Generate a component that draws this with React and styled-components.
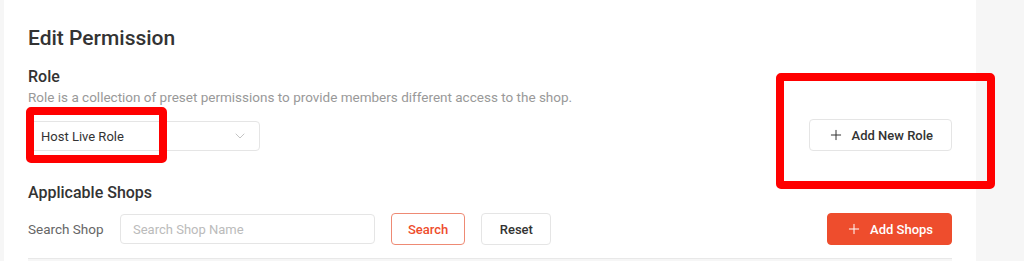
import React from "react";
import styled, { createGlobalStyle } from "styled-components";
import { Plus, ChevronDown } from "lucide-react";

const GlobalStyle = createGlobalStyle`
  body {
    margin: 0;
    background: #f6f6f6;
    font-family: Roboto, "Liberation Sans", Arial, sans-serif;
    color: #333;
  }
`;

export default function App() {
  return (
    <>
      <GlobalStyle />
      <StyledPage>
        <StyledCard>
          <StyledTitle>Edit Permission</StyledTitle>

          <StyledRoleRow>
            <div>
              <StyledSectionTitle>Role</StyledSectionTitle>
              <StyledHint>
                Role is a collection of preset permissions to provide members different access to the shop.
              </StyledHint>
              <StyledSelect>
                <span>Host Live Role</span>
                <ChevronDown size={16} strokeWidth={1.5} color="#c4c4c4" />
              </StyledSelect>
            </div>
            <StyledButton $icon>
              <Plus size={16} strokeWidth={1.5} />
              Add New Role
            </StyledButton>
          </StyledRoleRow>

          <StyledShopsTitle>Applicable Shops</StyledShopsTitle>
          <StyledSearchRow>
            <StyledLabel>Search Shop</StyledLabel>
            <StyledInput placeholder="Search Shop Name" />
            <StyledButton $variant="outline">Search</StyledButton>
            <StyledButton>Reset</StyledButton>
            <StyledSpacer />
            <StyledButton $variant="primary" $icon>
              <Plus size={16} strokeWidth={1.5} />
              Add Shops
            </StyledButton>
          </StyledSearchRow>
          <StyledTableHead />
        </StyledCard>

        <StyledMark $left={26} $top={107} $width={141} $height={56} />
        <StyledMark $left={776} $top={73} $width={219} $height={116} />
      </StyledPage>
    </>
  );
}

const StyledPage = styled.div`
  position: relative;
  height: 261px;
  overflow: hidden;
  padding-left: 4px;
`;

const StyledCard = styled.section`
  width: 924px;
  height: 261px;
  background: #fff;
  padding: 0 24px;
  overflow: hidden;
`;

const StyledTitle = styled.h2`
  margin: 0;
  padding-top: 25px;
  font-size: 21px;
  line-height: 26px;
  font-weight: 500;
  color: #333;
`;

const StyledRoleRow = styled.div`
  display: flex;
  justify-content: space-between;
  align-items: flex-end;
  margin-top: 16px;
`;

const StyledSectionTitle = styled.h3`
  margin: 0;
  font-size: 16px;
  line-height: 20px;
  font-weight: 500;
  color: #333;
`;

const StyledHint = styled.p`
  margin: 2px 0 0;
  font-size: 13.5px;
  line-height: 16px;
  color: #999;
`;

const StyledSelect = styled.div`
  display: flex;
  align-items: center;
  justify-content: space-between;
  box-sizing: border-box;
  width: 232px;
  height: 30px;
  margin-top: 16px;
  padding: 0 11px 0 12px;
  border: 1px solid #e5e5e5;
  border-radius: 4px;
  font-size: 13px;
  color: #333;
`;

const StyledShopsTitle = styled(StyledSectionTitle)`
  margin-top: 32px;
`;

const StyledSearchRow = styled.div`
  display: flex;
  align-items: center;
  gap: 16px;
  margin-top: 10px;
`;

const StyledLabel = styled.span`
  width: 76px;
  font-size: 13.5px;
  color: #666;
`;

const StyledInput = styled.input`
  box-sizing: border-box;
  width: 255px;
  height: 30px;
  padding: 0 12px;
  border: 1px solid #e5e5e5;
  border-radius: 4px;
  font-family: inherit;
  font-size: 13px;
  color: #333;
  outline: none;

  &::placeholder {
    color: #bbb;
  }
`;

const StyledSpacer = styled.div`
  flex: 1;
`;

const StyledButton = styled.button`
  display: inline-flex;
  align-items: center;
  justify-content: center;
  gap: 8px;
  box-sizing: border-box;
  min-width: 70px;
  height: 32px;
  padding: 0 ${(p) => (p.$icon ? "18px" : "16px")};
  border-radius: 4px;
  font-family: inherit;
  font-size: 13px;
  font-weight: 500;
  cursor: pointer;
  border: 1px solid
    ${(p) => (p.$variant === "outline" ? "#ee8a74" : p.$variant === "primary" ? "#ee4d2d" : "#e5e5e5")};
  background: ${(p) => (p.$variant === "primary" ? "#ee4d2d" : "#fff")};
  color: ${(p) => (p.$variant === "outline" ? "#ee4d2d" : p.$variant === "primary" ? "#fff" : "#333")};
`;

const StyledTableHead = styled.div`
  margin-top: 13px;
  height: 20px;
  background: #f6f6f6;
  border-top: 1px solid #e8e8e8;
`;

const StyledMark = styled.div`
  position: absolute;
  left: ${(p) => p.$left}px;
  top: ${(p) => p.$top}px;
  width: ${(p) => p.$width}px;
  height: ${(p) => p.$height}px;
  box-sizing: border-box;
  border: 8px solid #ff0000;
  border-radius: 5px;
  pointer-events: none;
`;
